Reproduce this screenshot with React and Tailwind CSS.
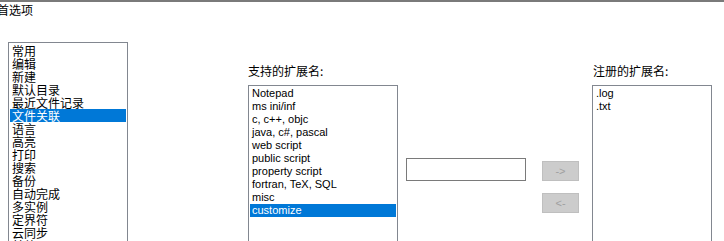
import React from "react";

const pages = [
  "常用", "编辑", "新建", "默认目录", "最近文件记录", "文件关联", "语言", "高亮",
  "打印", "搜索", "备份", "自动完成", "多实例", "定界符", "云同步", "其他",
];

const supported = [
  "Notepad", "ms ini/inf", "c, c++, objc", "java, c#, pascal", "web script",
  "public script", "property script", "fortran, TeX, SQL", "misc", "customize",
];

const registered = [".log", ".txt"];

const cjk = { fontFamily: '"Noto Sans CJK SC", "Noto Sans", sans-serif' };
const latin = { fontFamily: 'Tahoma, "Liberation Sans", Arial, sans-serif' };

function ListItem({ label, selected, font }) {
  return (
    <div
      className={`px-[2px] whitespace-nowrap ${selected ? "bg-[#0078d7] text-white" : "text-black"}`}
      style={font}
    >
      {label}
    </div>
  );
}

export default function App() {
  return (
    <div className="w-[724px] h-[241px] overflow-hidden bg-white relative">
      <div className="h-[2px] bg-[#7a7a7a]" />
      <div className="ml-[-3px] text-[12px] leading-[16px] text-black" style={cjk}>
        首选项
      </div>

      <div className="flex items-start mt-[24px]">
        {/* page list */}
        <div className="ml-[8px] w-[120px] h-[230px] border border-[#828790] p-[1px] text-[12px] leading-[13px]">
          {pages.map((p) => (
            <ListItem key={p} label={p} selected={p === "文件关联"} font={cjk} />
          ))}
        </div>

        {/* supported extensions */}
        <div className="ml-[120px] flex flex-col">
          <div className="mt-[21px] text-[12px] leading-[16px] text-black" style={cjk}>
            支持的扩展名:
          </div>
          <div className="mt-[6px] w-[150px] h-[170px] border border-[#828790] p-[1px] text-[11px] leading-[13px]">
            {supported.map((s) => (
              <ListItem key={s} label={s} selected={s === "customize"} font={latin} />
            ))}
          </div>
        </div>

        {/* new extension input */}
        <input
          type="text"
          className="ml-[8px] mt-[116px] w-[120px] h-[23px] border border-[#7a7a7a] bg-white outline-none"
        />

        {/* add / remove buttons */}
        <div className="ml-[16px] mt-[119px] flex flex-col gap-[12px]">
          <button
            disabled
            className="w-[37px] h-[20px] bg-[#cccccc] border border-[#bfbfbf] text-[11px] text-[#a0a0a0] leading-[18px]"
            style={latin}
          >
            -&gt;
          </button>
          <button
            disabled
            className="w-[37px] h-[20px] bg-[#cccccc] border border-[#bfbfbf] text-[11px] text-[#a0a0a0] leading-[18px]"
            style={latin}
          >
            &lt;-
          </button>
        </div>

        {/* registered extensions */}
        <div className="ml-[13px] flex flex-col">
          <div className="mt-[21px] ml-[1px] text-[12px] leading-[16px] text-black" style={cjk}>
            注册的扩展名:
          </div>
          <div className="mt-[6px] w-[120px] h-[170px] border border-[#828790] p-[1px] text-[11px] leading-[13px]">
            {registered.map((r) => (
              <ListItem key={r} label={r} font={latin} />
            ))}
          </div>
        </div>
      </div>
    </div>
  );
}
